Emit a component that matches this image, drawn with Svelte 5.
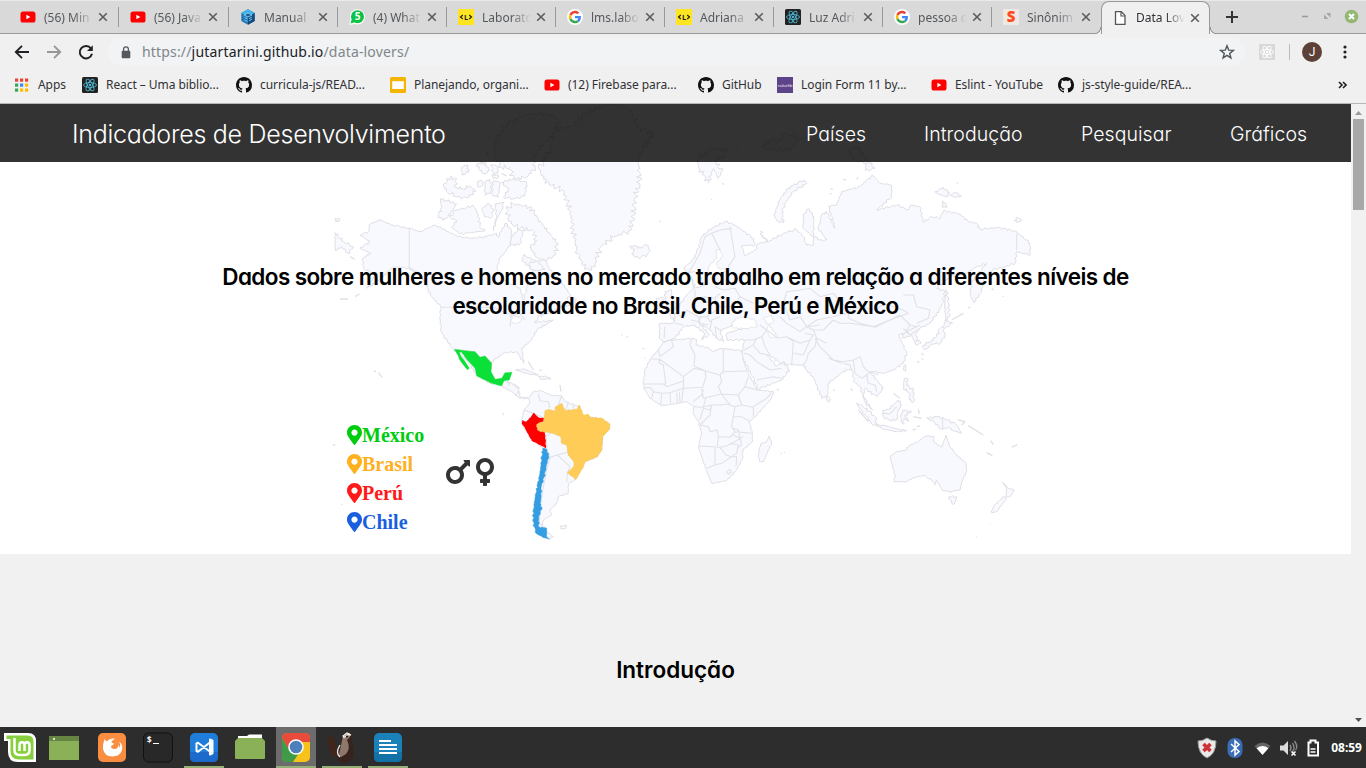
<script>
  const tabs = [
    ['yt', '(56) Min'], ['yt', '(56) Java'], ['cube', 'Manual'], ['wa', '(4) What'],
    ['lab', 'Laborato'], ['google', 'lms.labo'], ['lab', 'Adriana'], ['react', 'Luz Adri'],
    ['google', 'pessoa c'], ['sino', 'Sinônim'], ['page', 'Data Lov']
  ];
  const bookmarks = [
    ['apps', 'Apps', 68], ['react', 'React – Uma biblio...', 154], ['github', 'curricula-js/READ...', 154],
    ['slides', 'Planejando, organi...', 154], ['yt', '(12) Firebase para...', 154], ['github', 'GitHub', 79],
    ['color', 'Login Form 11 by...', 154], ['yt', 'Eslint - YouTube', 127], ['github', 'js-style-guide/REA...', 140]
  ];
  const legend = [['México', '#00cc10'], ['Brasil', '#ffb01f'], ['Perú', '#ff1a1a'], ['Chile', '#1a5fe0']];
  const tasks = [['mint', ''], ['window', ''], ['firefox', ''], ['term', ''], ['code', 'open'], ['folder', ''], ['chrome', 'open current'], ['beaver', 'open'], ['writer', 'open']];

  // Map units are thirds of a pixel. Each piece is [dx, dy, "x,y x,y ..."].
  const points = (pieces) => pieces.flatMap(([dx, dy, s]) => s.trim().split(/\s+/).map((p) => {
    const [x, y] = p.split(',').map(Number);
    return [x + dx, y + dy];
  }));
  // Breaks straight coast segments into a slightly irregular shoreline.
  const coast = (pieces, amp = 3.5) => {
    const p = points(pieces);
    let d = '';
    p.forEach(([x, y], i) => {
      const [nx, ny] = p[(i + 1) % p.length];
      const len = Math.hypot(nx - x, ny - y) || 1;
      const n = amp ? Math.min(14, Math.floor(len / 6)) : 0;
      d += `${i ? 'L' : 'M'}${x},${y}`;
      for (let k = 1; k <= n; k++) {
        const t = (k + 0.35 * Math.sin(k * 5.1 + x)) / (n + 1);
        const j = amp * (0.65 * Math.sin(x * 1.7 + y * 2.3 + k * 2.4) + 0.6 * Math.sin(k * 4.3 + y));
        d += `L${(x + (nx - x) * t - ((ny - y) / len) * j).toFixed(1)},${(y + (ny - y) * t + ((nx - x) / len) * j).toFixed(1)}`;
      }
    });
    return d + 'Z';
  };
  const lines = (dx, dy, list) => list.map((s) => 'M' + points([[dx, dy, s]]).map((p) => p.join(',')).join('L')).join('');

  const land = [
    // North America
    coast([[0, 0, '120,405 145,395 150,372 180,360 215,375 268,385 300,395 345,375 385,395 415,410 455,415 500,410 530,400 535,412 545,388 558,370 575,392 572,430 560,450 540,475 530,505 550,540 600,565 610,600 622,560 640,510 606,482 610,465 650,485 675,480 690,510 720,540 755,590 720,620 690,640 660,645 645,668'],
      [0, 660, '700,0 650,30 635,60 605,85 612,130 600,110 590,95 550,100 515,125 513,155 525,178 575,190 595,205 600,230 625,235 600,236 575,215 540,195 510,190 470,165 440,120 400,88 365,40 360,0'],
      [0, 0, '362,620 335,590 315,550 300,520 270,505 220,500 190,530 165,550 140,565 165,525 130,505 128,475 152,460 120,445 150,425']], 2.5),
    // South America
    coast([[0, 660, '640,215 665,212 690,225 725,228 735,245 780,262 785,285 830,295 868,312 870,325 848,350 845,390 830,412 795,425 765,480 745,490 745,520 715,530 710,550 690,570 695,585 670,600 665,625 700,650 685,658 650,640 645,590 655,530 665,470 670,385 635,360 607,315 605,300 612,270 630,250 625,235']], 1.5),
    // Greenland
    coast([[330, 12, '325,190 345,170 370,110 365,80 430,65 465,30 530,0 570,0 610,30 620,70 670,90 650,120 625,160 630,240 615,280 610,350 600,380 550,400 510,430 495,480 480,500 460,485 440,440 430,380 420,320 400,260 365,245 340,225']], 8),
    // Arctic archipelago
    coast([[330, 12, '190,150 200,100 230,60 290,30 360,30 390,50 370,90 340,120 310,165 315,190 290,220 250,225 240,190 215,190']], 7),
    coast([[330, 12, '215,235 250,225 290,235 285,275 255,285 220,280 235,255']]),
    coast([[330, 12, '30,285 50,290 80,300 60,330 40,350 25,335 35,310']]),
    coast([[330, 12, '75,320 130,305 145,330 150,370 165,380 130,385 90,390 65,370 80,350 60,340']]),
    coast([[330, 12, '230,315 250,300 300,308 325,345 355,385 385,420 370,455 345,470 320,460 300,430 320,410 310,380 280,375 250,365 235,345']], 7),
    coast([[330, 12, '40,245 60,220 80,225 75,250 100,255 120,245 138,262 110,282 80,278 50,262']], 5),
    coast([[330, 12, '195,300 222,295 215,320 200,345 190,380 200,335']]),
    coast([[330, 12, '155,315 175,298 190,315 185,340 165,340']]),
    coast([[330, 12, '165,235 180,225 185,260 165,275']]),
    coast([[330, 12, '190,230 210,235 205,280 185,270']]),
    coast([[330, 12, '95,190 112,182 115,205 95,212']]),
    coast([[330, 12, '140,180 165,175 178,200 165,210 150,200']]),
    coast([[330, 12, '185,180 200,185 205,205 190,210']]),
    coast([[330, 12, '140,235 155,228 158,245 145,250']]),
    coast([[330, 12, '185,212 205,214 200,224 188,222']]),
    coast([[330, 12, '265,375 280,380 270,420 240,425 245,400']]),
    coast([[330, 12, '298,478 320,470 345,495 320,500 300,495']]),
    coast([[0, 0, '45,398 70,425 100,440 85,460 65,440 46,452']]),
    coast([[0, 0, '45,355 60,358 48,366']]),
    coast([[0, 0, '745,590 770,600 760,622 735,615']]),
    coast([[0, 0, '930,440 945,435 955,445 980,435 992,452 980,465 955,474 935,462 945,450']]),
    // Eurasia
    coast([[1020, 0, '75,500 95,485 110,460 125,410 155,385 195,365 225,375 280,415 285,435 245,437 255,468 285,450 295,430 325,425 300,402 325,425 370,400 410,388 430,410 440,435 460,435 460,410 430,385 430,345 445,325 462,350 460,405 480,420 500,420 475,385 485,345 500,335 525,385 515,350 505,318 530,315 545,275 600,260 638,225 660,250 695,255 695,290 650,330 710,315 745,330 752,315 780,320 790,367 815,350 840,355 850,332 900,342 925,365 950,370 960,388 1015,382 1070,395 1110,430 1110,465 1070,455 1065,490'],
      [1560, 330, '490,172 460,178 430,205 425,245 400,278 390,250 395,215 440,160 400,175 380,190 330,200 290,235 315,245 305,290 270,340 240,355 225,375 242,400 228,405 215,375 185,385 190,370 175,375 187,400 200,430 190,460 160,480 130,490 100,485'],
      [900, 630, '750,185 790,235 770,260 735,235 730,260 758,300 738,282 720,230 704,218 695,175 670,185 625,220 622,260 605,265 580,200 560,180 550,165 515,165 480,160 450,135 442,137 470,168 490,155 508,180 485,210 415,237 398,200 365,140 372,90 320,90 320,70 360,58 400,45 370,25 345,30 330,50 300,60 310,95 290,85 270,60 235,35 268,75 245,88 255,72 225,45 190,50 165,85 130,97 118,85 120,40 160,40 165,8'],
      [960, 330, '105,335 80,305 115,290 140,255 160,235 155,200 165,235 195,225 180,200 165,185 135,190']], 2.8),
    // Africa
    coast([[900, 630, '130,97 145,92 215,85 230,88 228,105 260,112 280,125 300,115 365,122 372,160 385,190 412,240 460,245 455,265 405,320 388,335 397,370 397,395 368,420 368,445 350,480 320,512 275,520 265,495 250,455 235,410 245,370 235,335 218,310 222,290 200,275 175,280 125,287 90,265 72,235 70,215 75,180 92,145 115,120']], 1.5),
    coast([[900, 630, '448,378 455,400 430,455 418,455 415,430 422,402 440,395']], 1.5),
    // Europe and northern islands
    coast([[960, 330, '75,245 95,240 95,265 110,285 105,300 75,303 85,285 75,270']]),
    coast([[960, 330, '50,265 70,262 68,290 50,297']]),
    coast([[1020, 0, '432,240 440,250 400,275 375,310 365,340 370,368 350,362 342,345 355,310 365,290 390,260']]),
    coast([[1020, 0, '110,180 155,145 200,150 195,170 165,180 185,215 175,235 160,205 145,248 130,225 120,210']], 6),
    coast([[1020, 0, '305,140 335,120 360,125 375,100 415,115 390,150 345,150']], 6),
    coast([[1020, 0, '565,150 595,140 620,180 645,205 615,212 620,190 580,180']]),
    coast([[1020, 0, '825,275 850,262 870,280 860,290 840,285']]),
    coast([[1020, 0, '870,285 885,278 905,288 885,292']]),
    coast([[1020, 0, '845,318 850,303 862,322']]),
    coast([[1020, 0, '1062,362 1072,352 1085,360 1070,367']]),
    // East Asian islands
    coast([[1560, 330, '318,238 325,270 328,320 318,330 313,285']]),
    coast([[1560, 330, '315,330 338,340 320,350 310,355 312,340']]),
    coast([[1560, 330, '308,350 315,375 300,400 275,402 255,420 246,410 275,390 290,380 300,355']]),
    coast([[900, 630, '852,205 862,205 860,225 880,240 882,275 868,270 870,250 850,235']]),
    coast([[900, 630, '852,165 858,165 856,184 850,180']], 1),
    coast([[900, 630, '708,280 725,285 765,320 772,348 755,342 735,315']]),
    coast([[900, 630, '768,345 795,347 830,357 860,362 830,365 790,357']], 1.5),
    coast([[900, 630, '787,302 805,298 835,270 845,285 835,300 830,330 805,330 790,320']]),
    coast([[900, 630, '845,312 850,300 875,305 855,315 865,335 852,325 850,343 842,335']]),
    coast([[900, 630, '920,322 940,325 950,320 985,330 1010,345 1025,370 1000,362 985,352 965,358 940,335']]),
    coast([[900, 630, '620,258 632,270 625,277 620,270']]),
    coast([[900, 630, '810,440 830,425 855,422 870,405 895,395 915,378 942,380 940,395 965,412 978,375 990,410 1010,435 1038,460 1040,485 1025,515 1020,540 990,545 968,542 950,510 945,525 935,510 912,497 880,503 860,515 822,515 825,495']], 1.5),
    coast([[900, 630, '987,560 1010,560 1003,582 995,580']]),
    coast([[900, 630, '1148,517 1165,535 1182,540 1172,558 1158,562 1160,535']], 1.5),
    coast([[900, 630, '1150,560 1160,565 1130,605 1115,608 1120,590']], 1.5),
    coast([[0, 660, '587,150 615,148 655,165 630,163']], 1.5),
    coast([[0, 660, '655,170 675,168 693,176 662,178']], 1.5),
    coast([[0, 660, '720,618 740,617 735,627 722,626']])
  ];
  const specks = lines(0, 0, ['60,597 85,597', '105,590 118,582', '1018,362 1022,366', '1173,298 1177,299', '1207,250 1212,253', '500,155 504,165', '90,470 105,478', '480,185 495,195', '545,220 560,228'])
    + lines(0, 660, ['162,153 168,155', '175,158 187,172', '38,375 46,374', '63,552 67,554', '548,280 552,285', '905,45 908,46', '920,50 924,51', '625,125 640,150', '720,195 723,215', '658,150 665,151'])
    + lines(900, 630, ['470,238 476,240', '482,430 485,431', '492,427 495,428', '693,235 697,243', '892,155 896,157', '905,145 910,149', '880,320 905,325', '895,298 898,312', '878,360 888,357', '890,350 900,348', '1015,330 1035,335 1025,345', '1045,347 1090,375', '1112,392 1120,404', '1100,428 1117,437', '1175,412 1192,404', '1111,640 1113,641', '1069,680 1071,681', '68,115 73,117', '74,143 76,145', '820,250 840,265', '715,300 745,335', '640,240 645,242'])
    + lines(1560, 330, ['335,330 370,310', '385,295 390,290', '455,235 462,240', '488,258 492,260', '245,430 250,435', '234,457 238,455'])
    + lines(1020, 0, ['550,238 558,240', '590,238 595,232', '512,265 518,268', '510,280 515,282', '890,250 895,248', '300,395 310,398', '225,150 235,148', '400,95 410,100']);
  const borders = lines(0, 0, ['268,385 268,508 295,520 325,560', '362,622 520,622 560,640 600,650', '575,640 570,680', '695,640 740,610', '570,650 600,640 615,660', '690,630 660,650'])
    + lines(0, 660, ['405,88 465,95 480,112 495,108 515,130', '655,222 660,242 685,245 690,265', '612,270 640,280 672,294', '725,228 715,255', '745,245 738,270', '762,250 758,268', '695,338 678,350 682,395 690,412 712,405 745,395', '712,405 750,440 742,458', '690,412 680,450 672,490 662,550 658,610 680,625', '742,458 740,485', '560,180 570,190 565,198', '580,190 600,205', '600,215 585,225'])
    + lines(900, 630, [
      '115,120 120,140 160,110 155,95', '92,147 118,147 190,200 192,212 140,230 130,222', '118,147 117,158 130,165 137,222 72,222', '215,88 210,105 225,135 222,168 255,182 300,195 310,185 310,118', '190,200 222,175 255,182 258,200 248,232 190,235 190,212', '310,185 378,183', '300,195 305,215 295,230 305,252 250,265 245,235', '72,235 90,232 100,245 125,250 150,248 190,235', '100,245 95,265', '125,250 122,285', '150,248 152,280', '170,248 172,280', '178,245 180,278', '190,235 185,275', '250,238 245,255 220,275', '222,290 250,292 258,260', '250,290 275,285 300,285 320,282 345,290 365,285 400,292 400,320', '305,252 318,270 330,283', '305,252 355,255 365,285', '355,255 375,230 412,240', '375,230 385,200', '400,290 440,265 455,248', '275,285 270,315 240,345 265,350 270,365 292,360 295,380', '275,285 270,300 250,295 240,330', '345,290 340,320 365,320 390,335', '340,320 335,350 345,365 395,370', '295,380 330,382 345,365', '237,408 300,412 320,408 345,395 370,380', '295,380 292,408', '285,415 285,465 260,475', '300,412 318,435 335,440 350,430 355,405 330,400', '285,465 305,460 335,440 350,440 348,470', '320,485 330,478 335,486 325,493 320,485', '340,375 360,385 365,405 350,415', '130,97 165,85', '340,355 355,360 360,385',
      '135,50 132,85', '165,8 190,25 200,0', '190,45 165,40', '215,30 235,35 245,20', '270,60 275,30 300,20', '290,85 285,50 300,60', '372,90 400,90 425,80 440,60 420,45', '372,120 400,105 410,85', '372,130 390,135 410,155 450,180 485,175', '410,210 460,200 485,205', '400,105 420,130 445,135', '425,80 435,110 450,135', '475,85 500,80 520,95 515,165', '440,60 475,85', '500,80 540,100 570,90 580,75 555,70', '520,130 550,135 570,90', '550,165 560,150 565,130 585,110 590,85', '585,85 600,110 620,130 640,150 670,155 700,150 720,140 730,170 745,185', '625,145 665,160', '670,160 690,165 695,180', '700,150 705,190 725,205', '725,205 740,195 750,185 775,195', '740,195 745,220 765,225 770,245', '580,60 610,60 640,30 660,40 690,40 760,50 810,30 840,15', '560,50 580,60 590,85 620,100', '480,20 500,40 540,65 560,50 600,45', '840,15 870,45 855,70', '870,45 890,50', '968,320 968,357', '787,310 810,312 830,290', '845,75 870,60 900,45'])
    + lines(960, 330, ['145,190 180,130 195,80 215,70 240,60', '215,70 225,90 240,120', '270,50 285,140 265,170', '240,60 275,55', '225,230 250,240 285,235 300,260 340,280', '225,260 230,300 200,320', '240,250 225,265 190,260', '140,300 175,320 200,320 215,340', '165,240 165,290', '300,260 280,290 230,290', '175,320 180,340 205,345', '350,270 380,290', '430,280 440,245 480,240 510,235 540,260 580,250 625,300', '430,280 450,330 480,320 500,350 530,330 580,320 620,310'])
    + lines(1560, 330, ['530,68 530,120', '25,300 60,290 110,300 130,280 190,300 205,310 150,330 105,352 60,340 25,325 25,300', '190,255 220,255 230,290 270,300 265,325 230,340', '190,355 210,375 240,355', '225,395 240,390']);
  const water = [
    coast([[960, 330, '240,118 228,120 230,145 205,170 205,195 225,200 240,190 265,180 235,175 230,160 248,140']], 2),
    coast([[960, 330, '275,340 290,325 310,320 345,330 352,350 320,355 280,355']], 2),
    coast([[960, 330, '370,325 395,315 400,335 388,345 405,370 412,380 390,385 380,360 385,345']], 2),
    coast([[0, 0, '570,660 585,650 605,655 600,668 580,670']], 2)
  ];
  const mexico = coast([[0, 660, '403,88 435,92 465,95 480,112 495,108 515,130 513,155 525,178 545,175 555,158 576,157 568,180 552,182 545,198 515,190 470,168 465,145 440,118 425,97 418,96 422,108 432,120 448,145 442,149 428,132 418,118 415,108']], 0);
  const peru = coast([[0, 660, '640,278 655,292 672,294 670,305 650,312 652,330 675,335 678,384 665,378 635,362 615,325 605,310 607,300 618,305 632,292']], 1);
  const brazil = coast([[0, 660, '675,272 685,268 705,274 705,262 725,250 735,272 770,268 778,255 790,285 805,283 810,292 845,295 870,312 868,328 848,350 845,390 832,410 795,425 790,440 768,478 742,458 762,440 762,425 745,405 740,375 725,370 722,350 695,338 660,335 650,320 655,310 672,305']], 1);
  const chile = coast([[0, 660, '668,385 680,388 687,412 682,422 673,470 665,495 661,560 666,565 656,590 656,620 680,625 680,650 688,657 668,652 648,640 638,600 643,545 653,490 660,460']], 2.5);
</script>

{#snippet atom(c)}
  <g fill="none" stroke={c} stroke-width=".9"><ellipse cx="8" cy="8" rx="6.5" ry="2.5" /><ellipse cx="8" cy="8" rx="6.5" ry="2.5" transform="rotate(60 8 8)" /><ellipse cx="8" cy="8" rx="6.5" ry="2.5" transform="rotate(120 8 8)" /></g><circle cx="8" cy="8" r="1.3" fill={c} />
{/snippet}

{#snippet icon(n)}
  <svg class="fav" viewBox="0 0 16 16">
    {#if n === 'yt'}
      <rect x=".5" y="2.5" width="15" height="11" rx="2.6" fill="#f00" /><path d="M6.4 5.7v4.6l4-2.3z" fill="#fff" />
    {:else if n === 'cube'}
      <path d="M8 .3l6.700 3.800v7.800L8 15.700l-6.700-3.800V4.100z" fill="#2277b5" /><path d="M8 .3l6.700 3.800L8 8 1.300 4.100z" fill="#3fb3ea" /><path d="M8 8v7.700l6.700-3.800V4.100z" fill="#174a7c" /><path d="M4 6l4-2 4 2-4 2zM4.500 8.500l3 1.500M9 10l3-2M9 12l3-2M4.500 11l3 1.500" stroke="#7fd4f5" fill="#1d5c93" stroke-width=".9" />
    {:else if n === 'wa'}
      <circle cx="8.4" cy="7.8" r="7.6" fill="#fff" /><path d="M.3 15.8L1.5 9l6 5.8z" fill="#fff" /><circle cx="8.5" cy="7.7" r="6.5" fill="#0ac244" /><path d="M1.5 14.5l1.2-4.3 3 3.1z" fill="#0ac244" /><text x="8.5" y="11.3" font-size="10" font-weight="700" text-anchor="middle" fill="#fff">5</text>
    {:else if n === 'lab'}
      <rect width="16" height="16" fill="#ffe521" /><path d="M4.8 6L2.5 8l2.3 2M11.2 6l2.3 2-2.3 2" stroke="#222" stroke-width="1.2" fill="none" /><text x="8" y="10.6" font-size="7.5" font-weight="700" text-anchor="middle" fill="#222">L</text>
    {:else if n === 'google'}
      <circle cx="8" cy="8" r="8" fill="#fff" />
      <g transform="translate(1.8 1.8) scale(.258)"><path fill="#EA4335" d="M24 9.5c3.54 0 6.71 1.22 9.21 3.6l6.85-6.85C35.9 2.38 30.47 0 24 0 14.62 0 6.51 5.38 2.56 13.22l7.98 6.19C12.43 13.72 17.74 9.5 24 9.5z" /><path fill="#4285F4" d="M46.98 24.55c0-1.57-.15-3.09-.38-4.55H24v9.02h12.94c-.58 2.96-2.26 5.48-4.78 7.18l7.73 6c4.51-4.18 7.09-10.36 7.09-17.65z" /><path fill="#FBBC05" d="M10.53 28.59c-.48-1.45-.76-2.99-.76-4.59s.27-3.14.76-4.59l-7.98-6.19C.92 16.46 0 20.12 0 24c0 3.88.92 7.54 2.56 10.78l7.97-6.19z" /><path fill="#34A853" d="M24 48c6.48 0 11.93-2.13 15.89-5.81l-7.73-6c-2.15 1.45-4.92 2.3-8.16 2.3-6.26 0-11.57-4.22-13.47-9.91l-7.98 6.19C6.51 42.62 14.62 48 24 48z" /></g>
    {:else if n === 'react'}
      <rect width="16" height="16" rx="1.5" fill="#222" />{@render atom('#4fb3cc')}
    {:else if n === 'sino'}
      <rect width="16" height="16" fill="#eee9e2" /><text x="8" y="13.3" font-size="15" font-weight="900" text-anchor="middle" fill="#ff4b22">S</text>
    {:else if n === 'page'}
      <path d="M3.5 1.7h5.8L13 5.4v9H3.5z" fill="#fff" stroke="#555" stroke-width="1.3" /><path d="M9 2v4h4" fill="none" stroke="#555" stroke-width="1.2" />
    {:else if n === 'apps'}
      {#each ['#ea4335', '#ea4335', '#ea4335', '#34a853', '#4285f4', '#fbbc05', '#34a853', '#fbbc05', '#fbbc05'] as c, i}
        <rect x={1 + (i % 3) * 5} y={1.5 + Math.floor(i / 3) * 5} width="3.2" height="3.2" fill={c} />
      {/each}
    {:else if n === 'github'}
      <path fill="#111" d="M8 0C3.58 0 0 3.58 0 8c0 3.54 2.29 6.53 5.47 7.59.4.07.55-.17.55-.38 0-.19-.01-.82-.01-1.49-2.01.37-2.53-.49-2.69-.94-.09-.23-.48-.94-.82-1.13-.28-.15-.68-.52-.01-.53.63-.01 1.08.58 1.23.82.72 1.21 1.87.87 2.33.66.07-.52.28-.87.51-1.07-1.78-.2-3.64-.89-3.64-3.95 0-.87.31-1.59.82-2.15-.08-.2-.36-1.02.08-2.12 0 0 .67-.21 2.2.82.64-.18 1.32-.27 2-.27.68 0 1.36.09 2 .27 1.53-1.04 2.2-.82 2.2-.82.44 1.1.16 1.92.08 2.12.51.56.82 1.27.82 2.15 0 3.07-1.87 3.75-3.65 3.95.29.25.54.73.54 1.48 0 1.07-.01 1.93-.01 2.2 0 .21.15.46.55.38A8.013 8.013 0 0016 8c0-4.42-3.58-8-8-8z" />
    {:else if n === 'slides'}
      <rect width="16" height="16" rx="1.6" fill="#f5b400" /><rect x="2.2" y="4.2" width="11.6" height="7.8" fill="#fff" />
    {:else if n === 'color'}
      <rect width="16" height="16" fill="#5d4389" /><text x="8" y="9.6" font-size="4.3" textLength="14.5" lengthAdjust="spacingAndGlyphs" text-anchor="middle" fill="#fff">colorlib</text>
    {:else if n === 'ext'}
      <rect width="16" height="16" fill="#d8d8d8" />{@render atom('#fff')}
    {/if}
  </svg>
{/snippet}

<div class="screen">
  <header class="tabs">
    {#each tabs as [n, t], i}
      <div class="tab" class:wide={i < 2} class:active={i === 10} class:last={i === 9}>
        {@render icon(n)}<span class="title">{t}</span>
        <svg class="x" viewBox="0 0 10 10"><path d="M1.2 1.2l7.6 7.6M8.8 1.2L1.2 8.8" /></svg>
      </div>
    {/each}
    <svg class="plus" viewBox="0 0 12 12"><path d="M6 0v12M0 6h12" /></svg>
    <div class="wm">
      <svg width="70" height="20" viewBox="0 0 70 20"><path d="M11 10.5h6" stroke="#999da1" stroke-width="1.6" /><path d="M35 7h4.5v4.5zM33 8.5V13h4.5z" fill="#a3a6a9" /><circle cx="60.5" cy="10.5" r="6.8" fill="#93b873" /><path d="M58 8l5 5M63 8l-5 5" stroke="#fff" stroke-width="2" /></svg>
    </div>
  </header>

  <div class="toolbar">
    <svg class="navs" width="100" height="28" viewBox="0 0 100 28" fill="none"><path d="M29 14H16.5M22 7.8L15.8 14l6.2 6.2" stroke="#202124" stroke-width="1.9" /><path d="M47 14h12.5M54 7.8l6.2 6.2-6.2 6.2" stroke="#979797" stroke-width="1.9" /><path d="M91 10.5A6.2 6.2 0 1 0 92 15.7" stroke="#202124" stroke-width="2" /><path d="M92.8 7.3v5.8H87z" fill="#202124" /></svg>
    <div class="url">
      <svg width="10" height="13" viewBox="0 0 10 13"><rect x=".7" y="4.8" width="8.6" height="7.4" rx="1" fill="#55595e" /><path d="M2.6 5V3.3a2.4 2.4 0 0 1 4.8 0V5" fill="none" stroke="#55595e" stroke-width="1.3" /></svg>
      <span class="address">https://<b>jutartarini.github.io</b>/data-lovers/</span>
      <svg class="star" width="16" height="16" viewBox="0 0 16 16"><path d="M8 1.8l1.7 4.3 4.6.3-3.6 3 1.2 4.5L8 11.4l-3.9 2.5 1.2-4.5-3.6-3 4.6-.3z" fill="none" stroke="#50555b" stroke-width="1.4" /></svg>
    </div>
    {@render icon('ext')}
    <i class="sep"></i>
    <span class="avatar">J</span>
    <svg class="dots" width="4" height="14" viewBox="0 0 4 14" fill="#222"><circle cx="2" cy="2" r="1.6" /><circle cx="2" cy="7" r="1.6" /><circle cx="2" cy="12" r="1.6" /></svg>
  </div>

  <div class="bookmarks">
    {#each bookmarks as [n, t, w]}
      <div class="mark" style:width="{w}px">{@render icon(n)}<span>{t}</span></div>
    {/each}
    <svg class="more" width="9" height="8" viewBox="0 0 9 8"><path d="M1 1l3 3-3 3M5 1l3 3-3 3" fill="none" stroke="#222" stroke-width="1.6" /></svg>
  </div>

  <div class="viewport">
    <main>
      <section class="hero">
        <svg class="map" viewBox="0 0 1351 450">
          <g transform="translate(320 -4) scale(.333333)" stroke-linejoin="round">
            <g fill="#f8f9ff" stroke="#dddde4" stroke-width="3">{#each land as d}<path {d} />{/each}</g>
            <g fill="#fff" stroke="#e1e1e8" stroke-width="2.5">{#each water as d}<path {d} />{/each}</g>
            <path d={borders} fill="none" stroke="#e0e0e7" stroke-width="3.2" />
            <path d={specks} fill="none" stroke="#e0e0e7" stroke-width="4" />
            <path d={mexico} fill="#0be038" stroke="#0be038" /><path d={chile} fill="#359de2" stroke="#359de2" stroke-width="1.5" />
            <path d={peru} fill="#f00" /><path d={brazil} fill="#ffcd57" stroke="#f0c35a" stroke-width="2" />
          </g>
        </svg>
        <nav>
          <span class="brand">Indicadores de Desenvolvimento</span>
          <div class="links"><a href="#paises">Países</a><a href="#introducao">Introdução</a><a href="#pesquisar">Pesquisar</a><a href="#graficos">Gráficos</a></div>
        </nav>
        <h1><span>Dados sobre mulheres e homens no mercado trabalho em relação a diferentes níveis de</span><span class="l2">escolaridade no Brasil, Chile, Perú e México</span></h1>
        <div class="key">
          <ul>
            {#each legend as [t, c]}
              <li style:color={c}><svg width="15" height="20" viewBox="0 0 384 512" fill="currentColor"><path d="M172.268 501.67C26.97 291.031 0 269.413 0 192 0 85.961 85.961 0 192 0s192 85.961 192 192c0 77.413-26.97 99.031-172.268 309.67-9.535 13.774-29.93 13.773-39.464 0zM192 272c44.183 0 80-35.817 80-80s-35.817-80-80-80-80 35.817-80 80 35.817 80 80 80z" /></svg><span>{t}</span></li>
            {/each}
          </ul>
          <div class="genders">
            <svg width="24" height="32" viewBox="0 0 384 512"><path d="M372 64h-79c-10.7 0-16 12.9-8.5 20.4l16.9 16.9-80.7 80.7C198.5 167.1 172 160 144 160 64.5 160 0 224.5 0 304s64.5 144 144 144 144-64.5 144-144c0-28-7.9-54.1-21.7-76.4l80.7-80.7 16.9 16.9c7.6 7.6 20.4 2.2 20.4-8.5V76c0-6.6-5.4-12-12-12zM144 384c-44.1 0-80-35.9-80-80s35.9-80 80-80 80 35.9 80 80-35.9 80-80 80z" /></svg>
            <svg width="18" height="32" viewBox="0 0 288 512"><path d="M288 176c0-79.5-64.5-144-144-144S0 96.5 0 176c0 68.5 47.9 125.9 112 140.4V368H76c-6.6 0-12 5.4-12 12v40c0 6.6 5.4 12 12 12h36v36c0 6.6 5.4 12 12 12h40c6.6 0 12-5.4 12-12v-36h36c6.6 0 12-5.4 12-12v-40c0-6.6-5.4-12-12-12h-36v-51.6c64.1-14.6 112-71.9 112-140.4zm-224 0c0-44.1 35.9-80 80-80s80 35.9 80 80-35.9 80-80 80-80-35.9-80-80z" /></svg>
          </div>
        </div>
      </section>
      <section class="intro"><h2>Introdução</h2></section>
    </main>
    <div class="scroll"><svg width="7" height="4" viewBox="0 0 7 4"><path d="M0 4L3.5 0 7 4z" fill="#999" /></svg><i class="thumb"></i><svg width="7" height="4" viewBox="0 0 7 4"><path d="M0 0h7L3.5 4z" fill="#505050" /></svg></div>
  </div>

  <footer>
    {#each tasks as [n, state]}
      <div class="task {state}">
        <svg width="32" height="32" viewBox="0 0 32 32">
          {#if n === 'mint'}
            <path d="M0 1h24q8 0 8 8v21H14Q4 30 4 20V9H0z" fill="#fff" /><path d="M2.5 3.5h21q6 0 6 6v18H15q-8.500 0-8.500-8.500V7h-4z" fill="#87cf3e" /><path d="M10.500 6v12q0 5 5 5h5q5 0 5-5v-5q0-2.800-2.500-2.800T20.500 13v6M20.500 13q0-2.800-2.500-2.800T15.500 13v6" fill="none" stroke="#fff" stroke-width="2.500" />
          {:else if n === 'window'}
            <path d="M1 4h30v24H1z" fill="#8bb158" /><path d="M1 4h30v5H1z" fill="#668543" /><circle cx="6" cy="7" r="1" fill="#fff" />
          {:else if n === 'firefox'}
            <rect x="2" y="1" width="28" height="29" rx="5" fill="#f98d40" /><path d="M8.500 7l2 2.500q4-4 9-2.500-4 1-4 3.500l2.500 1q-.5 1.500-3 2.500 0 3 3.500 3t4-4q1 1 1 3 1.500-3-.5-6.500 4.500 3 3 8.500-2 6.500-9.500 6.500-8 0-9.500-7.500-.5-4 1.500-10z" fill="#fff" />
          {:else if n === 'term'}
            <rect x="1.500" y="1" width="29" height="29" rx="5" fill="#282828" stroke="#111" /><text x="5" y="11" font-size="8" font-weight="700" fill="#fff">$</text><path d="M11 11.500h6" stroke="#fff" />
          {:else if n === 'code'}
            <rect x="2" y="1" width="28" height="29" rx="5" fill="#1f7edb" /><path d="M2 20h28v5q0 5-5 5H7q-5 0-5-5z" fill="#1c6acb" /><path d="M8.500 11.500l1.500-.8 12.500 9.300V10L10 19.800l-1.500-.8zM22 7.500l2.500 1.200v12.600L22 22.500z" fill="none" stroke="#fff" stroke-width="2" stroke-linejoin="round" />
          {:else if n === 'folder'}
            <path d="M4 7V4h9l2-1.500h13V7z" fill="#fff" /><path d="M1 9l3-3h24l3 3v17q0 1-1 1H2q-1 0-1-1z" fill="#8bb158" />
          {:else if n === 'chrome'}
            <rect x="2" y="1" width="28" height="29" rx="5" fill="#f7c31b" /><path d="M2 6q0-5 5-5h18q5 0 5 5v4H16l-7 8z" fill="#e84b3c" /><path d="M2 6l8 13 9 2-6 9H7q-5 0-5-5z" fill="#3f9b48" /><circle cx="16" cy="15" r="7.800" fill="#fff" /><circle cx="16" cy="15" r="6.300" fill="#4b80bb" />
          {:else if n === 'beaver'}
            <path d="M7 25Q-1 12 4 2q8 8 8 22z" fill="#40251b" /><path d="M15 5q3-6 9-5 3 1 2 5-1 2 1 7 4 18-8 19-7 0-8-5l5-8z" fill="#37231e" /><path d="M17 4q3-4 7-3v4l-3 3q4 8-1 14l-5 3q-3-2-1-7z" fill="#8e7768" /><path d="M17 4l4-3 4 2-3-.5-4 3zM14 13q-5 8 0 12" stroke="#eee" fill="none" stroke-width="1.300" /><circle cx="21" cy="4.500" r="1" fill="#111" />
          {:else}
            <rect x="2" y="1" width="28" height="29" rx="5" fill="#1b82b9" /><path d="M2 20h28v5q0 5-5 5H7q-5 0-5-5z" fill="#1272a7" /><path d="M7 9h12M7 13h18M7 17h18M7 21h18" stroke="#fff" stroke-width="2" />
          {/if}
        </svg>
      </div>
    {/each}
    <svg class="tray" width="130" height="24" viewBox="0 0 130 24">
      <path d="M11 2q4 3 9 3 0 13-9 17Q2 18 2 5q5 0 9-3z" fill="#e9e9e9" stroke="#9a9a9a" /><path d="M7.500 8l7 7M14.500 8l-7 7" stroke="#cc3338" stroke-width="3.600" />
      <rect x="31.500" y="2" width="15" height="20" rx="7" fill="#3a6db5" /><path d="M35 8l8 7.500-4 3.500V5l4 3.500L35 16" fill="none" stroke="#fff" stroke-width="1.500" />
      <path d="M58.500 10q8-7 16 0l-2 2.300q-6-4-12 0z" fill="#666" /><path d="M60.500 12.300q6-4.500 12 0L66.500 19z" fill="#fff" />
      <path d="M84 9.500h3.500L92 5v14l-4.500-4.500H84z" fill="#ddd" /><path d="M94 9q2 3 0 6M96.500 7q3 5 0 9M98.500 5q4 6 1 9" stroke="#888" fill="none" stroke-width="1.400" /><path d="M95.500 15.500l4 4M99.500 15.500l-4 4" stroke="#fff" stroke-width="1.500" />
      <path d="M112.500 6.500h2v-2h5v2h2.500v13h-9.500z" fill="none" stroke="#fff" stroke-width="2" /><path d="M114.500 13h5M114.500 16h5" stroke="#fff" stroke-width="1.600" />
    </svg>
    <time>08:59</time>
  </footer>
</div>

<style>
  :global(body) { margin: 0; overflow: hidden; }
  .screen { width: 1366px; height: 768px; display: flex; flex-direction: column; font-family: "Noto Sans", sans-serif; background: #f0f0f0; overflow: hidden; }
  svg { display: block; flex: none; }
  .fav { width: 16px; height: 16px; }
  .tabs { box-sizing: border-box; height: 34px; flex: none; display: flex; background: #d9d9d9; border-top: 1px solid #e9e9e9; border-bottom: 1px solid #999; padding-left: 10px; }
  .tab { box-sizing: border-box; width: 109px; height: 32px; flex: none; display: flex; align-items: center; padding-left: 10px; position: relative; font-size: 12px; color: #55585c; }
  .tab.wide { width: 110px; }
  .tab:not(.active):not(.last)::after { content: ""; position: absolute; right: 1px; top: 6px; height: 20px; width: 1px; background: #999; }
  .title { width: 54px; margin-left: 8px; white-space: nowrap; mask-image: linear-gradient(90deg, #000 55%, transparent 90%); }
  .x { width: 10px; height: 10px; fill: none; stroke: #5c5c5c; stroke-width: 1.6; }
  .active { margin-left: -1px; height: 33px; background: #f0f0f0; border: 1px solid #999; border-bottom: 0; border-radius: 8px 8px 0 0; color: #303236; padding-bottom: 1px; z-index: 1; }
  .active::before, .active::after { content: ""; position: absolute; bottom: 0; width: 7px; height: 7px; }
  .active::before { left: -8px; background: radial-gradient(circle at 0 0, transparent 6px, #999 6.500px, #999 7px, #f0f0f0 7.500px); }
  .active::after { right: -8px; background: radial-gradient(circle at 100% 0, transparent 6px, #999 6.500px, #999 7px, #f0f0f0 7.500px); }
  .plus { width: 12px; height: 12px; margin: 10px 0 0 16px; stroke: #333; stroke-width: 2; }
  .wm { margin: 5px 0 0 auto; padding-right: 5px; }
  .toolbar { height: 36px; flex: none; display: flex; align-items: center; }
  .navs { margin-right: 8px; }
  .url { width: 1137px; height: 28px; border-radius: 14px; background: #f1f3f4; display: flex; align-items: center; box-sizing: border-box; padding: 0 10px 0 13px; margin-right: 14px; }
  .address { font-size: 14px; margin-left: 11px; color: #80868b; white-space: nowrap; letter-spacing: .17px; padding-bottom: 1px; }
  .address b { font-weight: 400; color: #202124; }
  .star { margin-left: auto; }
  .sep { width: 1px; height: 16px; background: #bbb; margin: 0 12px 0 14px; }
  .avatar { width: 20px; height: 20px; border-radius: 50%; background: #5d4037; color: #fff; font: 12px/20px Roboto, sans-serif; text-align: center; }
  .dots { margin-left: 21px; }
  .bookmarks { box-sizing: border-box; height: 34px; flex: none; display: flex; align-items: center; border-bottom: 1px solid #b6b6b6; padding: 0 0 4px 14px; font-size: 12px; color: #303236; letter-spacing: -.06px; }
  .mark { display: flex; align-items: center; gap: 8px; white-space: nowrap; flex: none; }
  .more { margin: 0 19px 0 auto; }
  .viewport { height: 623px; flex: none; display: flex; }
  main { width: 1351px; font-family: Inter, sans-serif; font-feature-settings: "cv11"; }
  .hero { height: 450px; background: #fff; position: relative; overflow: hidden; }
  .map { position: absolute; inset: 0; width: 1351px; height: 450px; }
  nav { position: relative; height: 58px; background: rgba(0, 0, 0, .8); display: flex; align-items: center; justify-content: space-between; color: #fff; box-sizing: border-box; padding: 2px 43px 0 72px; white-space: nowrap; }
  .brand { font-size: 25px; font-weight: 300; letter-spacing: -.27px; }
  .links { display: grid; grid-template-columns: 118px 157px 149px 78px; }
  .links a { color: #fff; text-decoration: none; font-size: 19.5px; font-weight: 300; letter-spacing: .05px; }
  h1 { position: relative; margin: 100px 0 0; font-size: 22.5px; line-height: 29px; font-weight: 600; text-align: center; white-space: nowrap; color: #000; display: flex; flex-direction: column; align-items: center; letter-spacing: -.59px; }
  .l2 { letter-spacing: -.71px; }
  .key { position: relative; display: flex; align-items: center; margin: 100px 0 0 347px; }
  ul { list-style: none; margin: 0; padding: 0; width: 99px; font: bold 20px/29px "Liberation Serif", serif; }
  li { display: flex; align-items: center; height: 29px; }
  li span { padding-top: 2px; }
  .genders { display: flex; gap: 6px; fill: #333; padding-bottom: 12px; }
  .intro { height: 173px; background: #f1f1f1; }
  h2 { margin: 0; padding-top: 101px; font-size: 22.5px; line-height: 29px; font-weight: 600; text-align: center; color: #000; }
  .scroll { width: 15px; background: #f1f1f1; box-sizing: border-box; padding: 7px 0 5px; display: flex; flex-direction: column; align-items: center; }
  .thumb { width: 11px; height: 91px; background: #a8a8a8; margin: 4px 0 auto; }
  footer { height: 41px; flex: none; background: #2d2d2d; display: flex; align-items: center; }
  .task { width: 40px; height: 41px; box-sizing: border-box; margin-right: 6px; flex: none; display: flex; justify-content: center; padding-top: 5px; border-bottom: 2px solid transparent; }
  .task:first-child { margin-right: 4px; }
  .task:nth-child(2) { margin-right: 8px; }
  .open { border-color: #94b077; }
  .current { background: #6c6c6c; }
  .tray { margin-left: auto; }
  time { color: #fff; font-size: 12px; font-weight: 700; margin: 0 4px 0 5px; }
</style>
